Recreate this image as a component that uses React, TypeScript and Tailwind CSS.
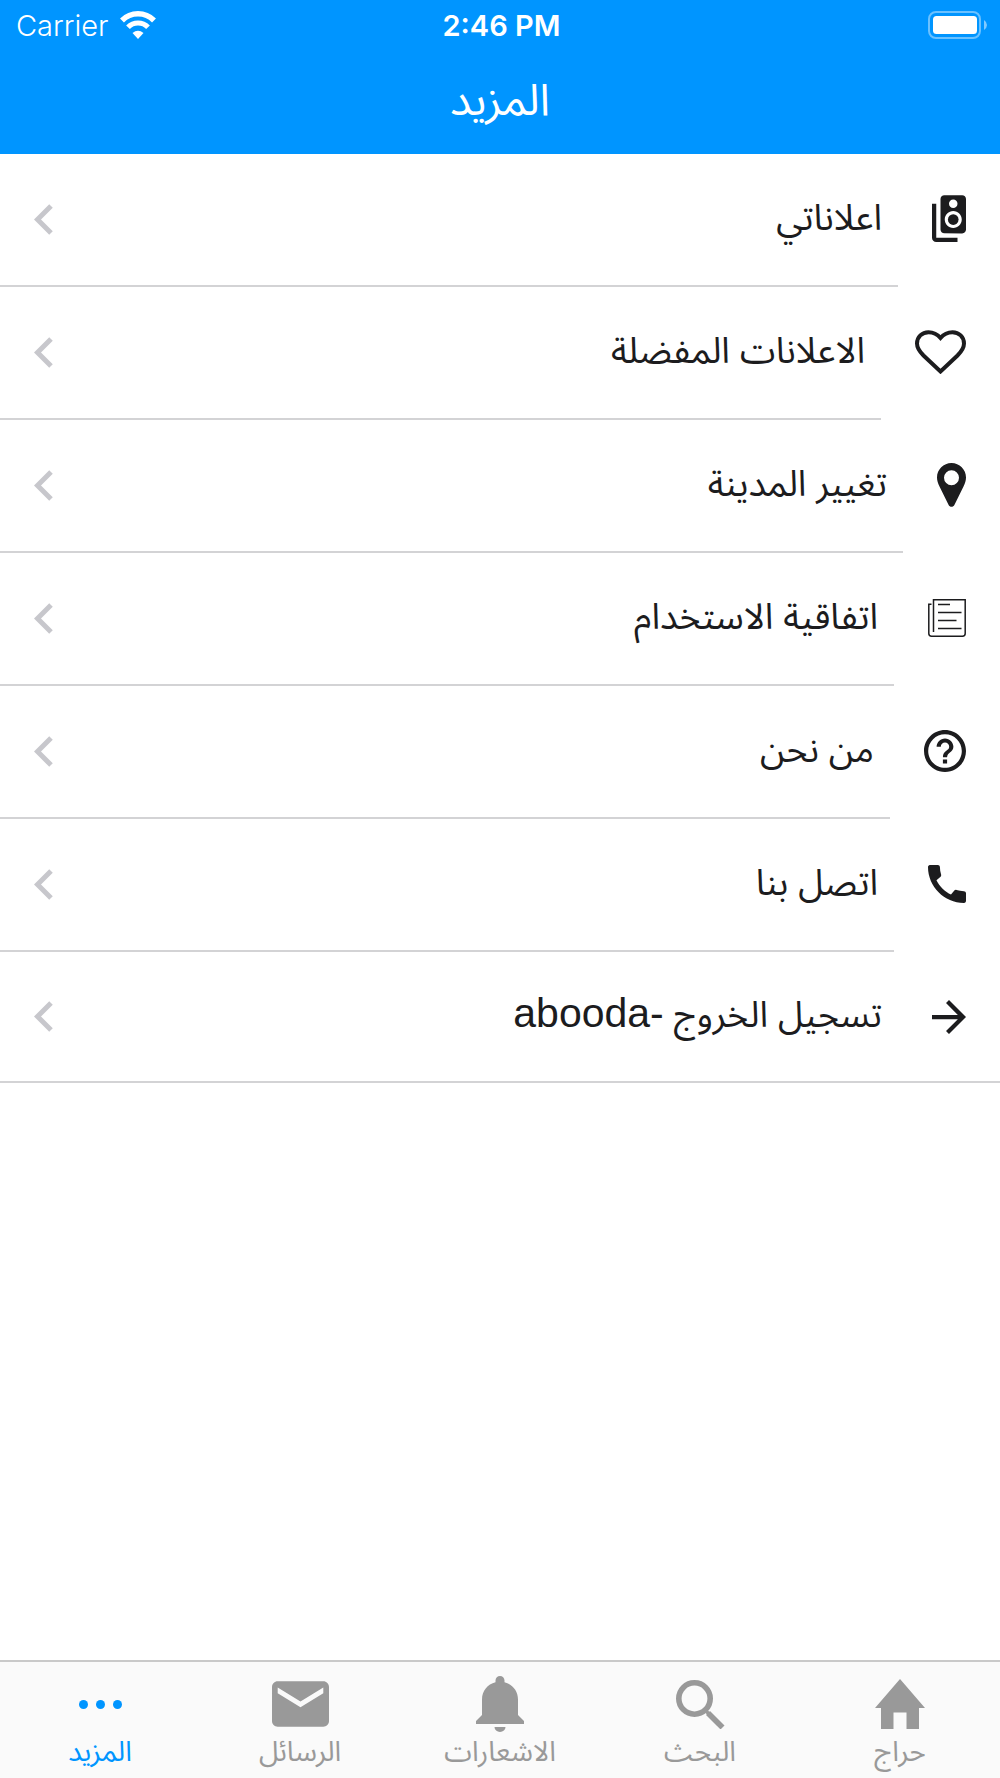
import React from "react";

const SpeakerIcon = () => (
  <svg viewBox="4 1 16 22" className="h-[47px] w-[34px]" fill="currentColor" aria-hidden="true">
    <path d="M18.2 1H9.8C8.81 1 8 1.81 8 2.8v14.4c0 .99.81 1.79 1.8 1.79l8.4.01c.99 0 1.8-.81 1.8-1.8V2.8c0-.99-.81-1.8-1.8-1.8zM14 3c1.1 0 2 .89 2 2s-.9 2-2 2-2-.89-2-2 .9-2 2-2zm0 13.5c-2.21 0-4-1.79-4-4s1.79-4 4-4 4 1.79 4 4-1.79 4-4 4z" />
    <circle cx="14" cy="12.5" r="2.5" />
    <path d="M6 5H4v16c0 1.1.89 2 2 2h10v-2H6V5z" />
  </svg>
);

const HeartIcon = () => (
  <svg viewBox="0 0 51 44" className="h-11 w-[51px]" fill="none" stroke="currentColor" strokeWidth="4" aria-hidden="true">
    <path d="M25.5 8C22.5 4.4 18 2.2 13.5 2.2C7 2.2 2 7 2 13.5C2 18.5 4.5 21.5 8.5 25.5L25.5 41.5L42.5 25.5C46.5 21.5 49 18.5 49 13.5C49 7 44 2.2 37.5 2.2C33 2.2 28.5 4.4 25.5 8Z" />
  </svg>
);

const PinIcon = () => (
  <svg viewBox="0 0 29 44" className="h-11 w-[29px]" fill="currentColor" fillRule="evenodd" aria-hidden="true">
    <path d="M14.5 0C6.5 0 0 6.5 0 14.5C0 17.5 1 20.3 2.5 23.5L11.5 41.8C12.8 44.5 16.2 44.5 17.5 41.8L26.5 23.5C28 20.3 29 17.5 29 14.5C29 6.5 22.5 0 14.5 0ZM14.5 7.2A7.5 7.5 0 1 1 14.5 22.2A7.5 7.5 0 1 1 14.5 7.2Z" />
  </svg>
);

const PaperIcon = () => (
  <svg viewBox="0 0 38 38" className="h-[38px] w-[38px]" fill="none" stroke="currentColor" strokeWidth="1.5" aria-hidden="true">
    <path d="M5.5 33V.8H37.2V34.5Q37.2 37.2 34.5 37.2H3.5Q.8 37.2 .8 34.5V5.2H3.5M10 5.5H22M10 13.5H33.5M10 21.5H28.5M10 29.5H33.5" />
  </svg>
);

const HelpIcon = () => (
  <svg viewBox="2 2 20 20" className="h-[42px] w-[42px]" fill="currentColor" aria-hidden="true">
    <path d="M11 18h2v-2h-2v2zm1-16C6.48 2 2 6.48 2 12s4.48 10 10 10 10-4.48 10-10S17.52 2 12 2zm0 18c-4.41 0-8-3.59-8-8s3.59-8 8-8 8 3.59 8 8-3.59 8-8 8zm0-14c-2.21 0-4 1.79-4 4h2c0-1.1.9-2 2-2s2 .9 2 2c0 2-3 1.75-3 5h2c0-2.25 3-2.5 3-5 0-2.21-1.79-4-4-4z" />
  </svg>
);

const PhoneIcon = () => (
  <svg viewBox="3 3 18 18" className="h-[38px] w-[38px]" fill="currentColor" aria-hidden="true">
    <path d="M20.01 15.38c-1.23 0-2.42-.2-3.53-.56-.35-.12-.74-.03-1.01.24l-1.57 1.97c-2.83-1.35-5.48-3.9-6.89-6.83l1.95-1.66c.27-.28.35-.67.24-1.02-.37-1.11-.56-2.3-.56-3.53 0-.54-.45-.99-.99-.99H4.19C3.65 3 3 3.24 3 3.99 3 13.28 10.73 21 20.01 21c.71 0 .99-.63.99-1.18v-3.45c0-.54-.45-.99-.99-.99z" />
  </svg>
);

const ArrowIcon = () => (
  <svg viewBox="4 4 16 16" className="h-[34px] w-[34px]" fill="currentColor" aria-hidden="true">
    <path d="M12 4l-1.41 1.41L16.17 11H4v2h12.17l-5.58 5.59L12 20l8-8z" />
  </svg>
);

const Chevron = () => (
  <svg viewBox="0 0 19 31" className="h-[31px] w-[19px] shrink-0" fill="none" stroke="#c7c7cc" strokeWidth="5" aria-hidden="true">
    <path d="M17 2L3.5 15.5L17 29" />
  </svg>
);

const MoreIcon = () => (
  <svg viewBox="0 0 43 9" className="h-[9px] w-[43px]" fill="currentColor" aria-hidden="true">
    <circle cx="4.5" cy="4.5" r="4.5" />
    <circle cx="21.5" cy="4.5" r="4.5" />
    <circle cx="38.5" cy="4.5" r="4.5" />
  </svg>
);

const MailIcon = () => (
  <svg viewBox="2 4 20 16" className="h-[46px] w-[57px]" fill="currentColor" aria-hidden="true">
    <path d="M20 4H4c-1.1 0-1.99.9-1.99 2L2 18c0 1.1.9 2 2 2h16c1.1 0 2-.9 2-2V6c0-1.1-.9-2-2-2zm0 4.2l-8 4.9-8-4.9V6.2l8 4.9 8-4.9v2z" />
  </svg>
);

const BellIcon = () => (
  <svg viewBox="0 0 48 56" className="h-14 w-12" fill="currentColor" aria-hidden="true">
    <path d="M24 0C21.500 0 19.500 2 19.500 4.500V6.300C11.500 8.200 6 15 6 23.500V39L0 45V48H48V45L42 39V23.500C42 15 36.500 8.200 28.500 6.300V4.500C28.500 2 26.500 0 24 0ZM18.500 51A5.500 5 0 0 0 29.500 51Z" />
  </svg>
);

const SearchIcon = () => (
  <svg viewBox="0 0 49 49" className="h-[49px] w-[49px]" fill="none" stroke="currentColor" aria-hidden="true">
    <circle cx="18.5" cy="18.5" r="15.7" strokeWidth="5.6" />
    <path d="M32 33L46.5 47.5" strokeWidth="5.6" />
    <path d="M29 30L34 35" strokeWidth="3.5" />
  </svg>
);

const HomeIcon = () => (
  <svg viewBox="0 0 50 50" className="h-[50px] w-[50px]" fill="currentColor" aria-hidden="true">
    <path d="M25 0L50 29H44V50H31.5V33.5H18.5V50H6V29H0Z" />
  </svg>
);

const WifiIcon = () => (
  <svg viewBox="0 0 36 31" className="h-[31px] w-9" fill="none" stroke="currentColor" aria-hidden="true">
    <path d="M2 10.5A22.5 22.5 0 0 1 34 10.5" strokeWidth="5.5" />
    <path d="M8 17.2A14 14 0 0 1 28 17.2" strokeWidth="5.2" />
    <path d="M12.5 23Q18 18.5 23.5 23L18 29Z" fill="currentColor" stroke="none" />
  </svg>
);

const BatteryIcon = () => (
  <svg viewBox="0 0 59 28" className="h-7 w-[59px]" aria-hidden="true">
    <rect x="1" y="1" width="51" height="26" rx="7" fill="none" stroke="#fff" strokeOpacity=".42" strokeWidth="2" />
    <rect x="5" y="5" width="44" height="18" rx="3.5" fill="#fff" />
    <path d="M56 9Q59 11 59 14Q59 17 56 19Z" fill="#fff" fillOpacity=".5" />
  </svg>
);

const menu = [
  { label: "اعلاناتي", user: "", Icon: SpeakerIcon },
  { label: "الاعلانات المفضلة", user: "", Icon: HeartIcon },
  { label: "تغيير المدينة", user: "", Icon: PinIcon },
  { label: "اتفاقية الاستخدام", user: "", Icon: PaperIcon },
  { label: "من نحن", user: "", Icon: HelpIcon },
  { label: "اتصل بنا", user: "", Icon: PhoneIcon },
  { label: "تسجيل الخروج ", user: "-abooda", Icon: ArrowIcon },
];

const tabs = [
  { label: "حراج", Icon: HomeIcon, active: false },
  { label: "البحث", Icon: SearchIcon, active: false },
  { label: "الاشعارات", Icon: BellIcon, active: false },
  { label: "الرسائل", Icon: MailIcon, active: false },
  { label: "المزيد", Icon: MoreIcon, active: true },
];

export default function App() {
  return (
    <div dir="rtl" className="flex min-h-screen flex-col bg-white font-['Liberation_Sans','Noto_Sans_Arabic','DejaVu_Sans',sans-serif] text-[#1c1c1e]">
      <header className="bg-[#0095ff] text-white">
        <div dir="ltr" className="grid h-[50px] grid-cols-3 items-center pr-[13px] pl-4 font-['Inter',sans-serif] text-[29px] leading-none">
          <div className="flex items-center gap-3">
            <span className="font-light">Carrier</span>
            <WifiIcon />
          </div>
          <time className="text-center font-semibold">2:46 PM</time>
          <div className="flex justify-end">
            <BatteryIcon />
          </div>
        </div>
        <h1 className="flex h-[104px] items-center justify-center pb-1 text-[44px]">المزيد</h1>
      </header>

      <main className="grow">
        <ul>
          {menu.map(({ label, user, Icon }) => (
            <li key={label} className="group last:border-b-2 last:border-[#d3d3d5]">
              <a href="#" className="flex items-stretch gap-[34px] pr-[34px]">
                <span className="flex shrink-0 items-center pb-1 group-last:pb-0">
                  <Icon />
                </span>
                <span className="flex h-[133px] grow items-center justify-between border-b-2 border-[#d3d3d5] pr-4 pl-[34px] text-[36px] group-last:h-[129px] group-last:border-b-0">
                  <span className="pb-1">
                    {label}
                    {user && <span className="text-[41px] leading-none">{user}</span>}
                  </span>
                  <Chevron />
                </span>
              </a>
            </li>
          ))}
        </ul>
      </main>

      <nav className="grid grid-cols-5 border-t-2 border-[#c9c9c9] bg-[#fafafa]">
        {tabs.map(({ label, Icon, active }) => (
          <a
            key={label}
            href="#"
            aria-current={active ? "page" : undefined}
            className={active ? "flex h-[116px] flex-col items-center text-[#0095ff]" : "flex h-[116px] flex-col items-center text-[#999999]"}
          >
            <span className="flex h-[76px] items-center pt-2">
              <Icon />
            </span>
            <span className="text-[28px] leading-none">{label}</span>
          </a>
        ))}
      </nav>
    </div>
  );
}
